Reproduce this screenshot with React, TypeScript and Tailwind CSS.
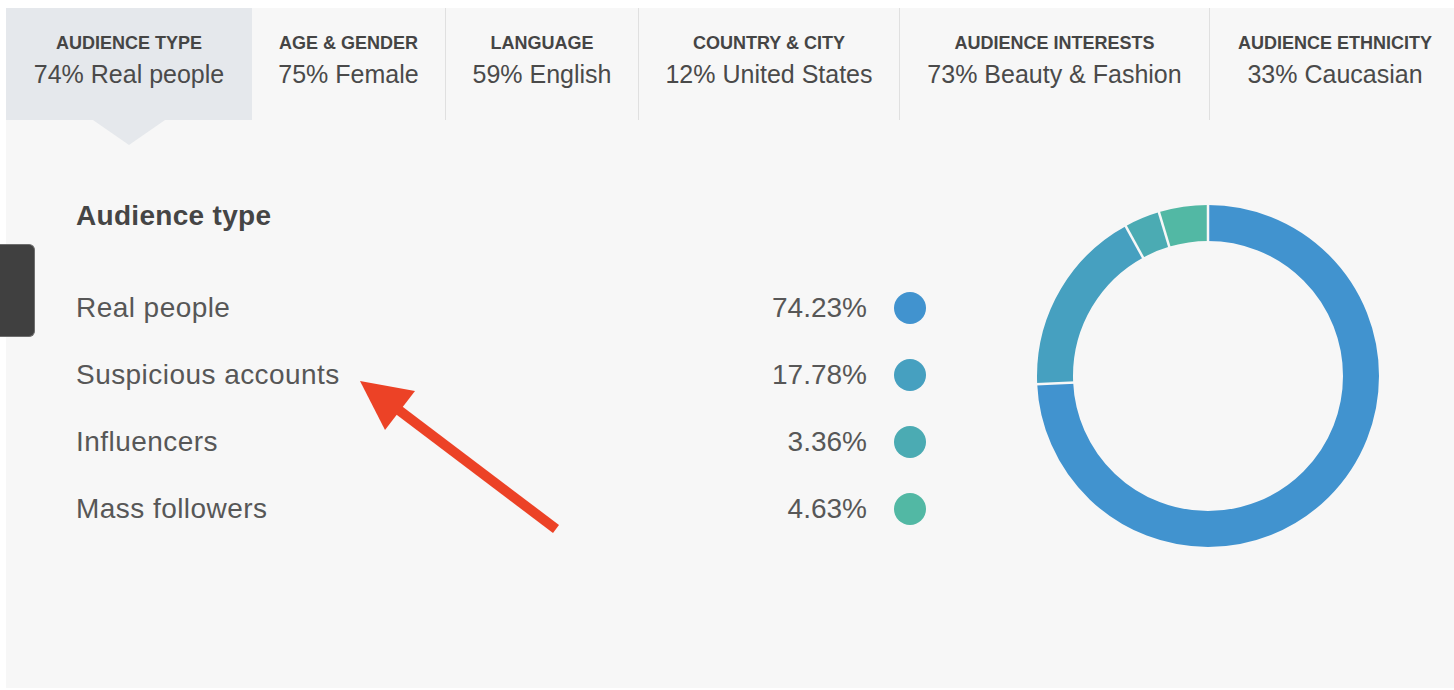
import React from "react";

type Tab = { label: string; value: string; width: string; active?: boolean };

const tabs: Tab[] = [
  { label: "AUDIENCE TYPE", value: "74% Real people", width: "w-[246px]", active: true },
  { label: "AGE & GENDER", value: "75% Female", width: "w-[194px]" },
  { label: "LANGUAGE", value: "59% English", width: "w-[193px]" },
  { label: "COUNTRY & CITY", value: "12% United States", width: "w-[261px]" },
  { label: "AUDIENCE INTERESTS", value: "73% Beauty & Fashion", width: "w-[310px]" },
  { label: "AUDIENCE ETHNICITY", value: "33% Caucasian", width: "w-[250px]" },
];

const rows = [
  { name: "Real people", pct: 74.23, color: "#4193cf", dot: "bg-[#4193cf]" },
  { name: "Suspicious accounts", pct: 17.78, color: "#46a0c0", dot: "bg-[#46a0c0]" },
  { name: "Influencers", pct: 3.36, color: "#4babb3", dot: "bg-[#4babb3]" },
  { name: "Mass followers", pct: 4.63, color: "#52b8a4", dot: "bg-[#52b8a4]" },
];

function Donut() {
  const size = 344;
  const c = size / 2;
  const r = 153;
  const circ = 2 * Math.PI * r;
  const total = rows.reduce((s, x) => s + x.pct, 0);
  let start = 0;
  const bounds: number[] = [];

  return (
    <svg width={size} height={size} viewBox={`0 0 ${size} ${size}`}>
      <g transform={`rotate(-90 ${c} ${c})`}>
        {rows.map((row) => {
          const len = (row.pct / total) * circ;
          const offset = -start;
          bounds.push(start / circ);
          start += len;
          return (
            <circle
              key={row.name}
              cx={c}
              cy={c}
              r={r}
              fill="none"
              stroke={row.color}
              strokeWidth={36}
              strokeDasharray={`${len} ${circ}`}
              strokeDashoffset={offset}
            />
          );
        })}
      </g>
      {bounds.map((b, i) => {
        const a = b * 2 * Math.PI;
        const x1 = c + 133 * Math.sin(a);
        const y1 = c - 133 * Math.cos(a);
        const x2 = c + 173 * Math.sin(a);
        const y2 = c - 173 * Math.cos(a);
        return <line key={i} x1={x1} y1={y1} x2={x2} y2={y2} stroke="#f7f7f7" strokeWidth={2.5} />;
      })}
    </svg>
  );
}

export default function App() {
  return (
    <div className="relative w-[1454px] h-[690px] bg-white overflow-hidden font-['Liberation_Sans',Arial,sans-serif]">
      <div className="relative ml-[6px] mt-[8px] h-[680px] bg-[#f7f7f7]">
        <div className="flex h-[112px]">
          {tabs.map((tab, i) => (
            <div
              key={tab.label}
              className={`relative shrink-0 ${tab.width} flex flex-col items-center pt-[25px] ${
                tab.active ? "bg-[#e5e8ec]" : ""
              } ${i > 0 && i < tabs.length - 1 ? "border-r border-[#e0e0e0]" : ""}`}
            >
              <div className="text-[18px] leading-[20px] font-bold text-[#454545] whitespace-nowrap">{tab.label}</div>
              <div className="mt-[7px] text-[25px] leading-[28px] text-[#4a4a4a] whitespace-nowrap">{tab.value}</div>
              {tab.active && (
                <div className="absolute left-1/2 -translate-x-1/2 top-full w-0 h-0 border-x-[36px] border-t-[25px] border-x-transparent border-t-[#e5e8ec]" />
              )}
            </div>
          ))}
        </div>

        <div className="flex pt-[80px] pl-[70px]">
          <div className="w-[850px] shrink-0">
            <h2 className="text-[28px] leading-[32px] font-bold tracking-[0.3px] text-[#454545]">Audience type</h2>
            <div className="mt-[42px]">
              {rows.map((row) => (
                <div key={row.name} className="h-[67px] flex items-center justify-between">
                  <span className="text-[28px] leading-[32px] tracking-[0.45px] text-[#575757]">{row.name}</span>
                  <div className="flex items-center">
                    <span className="text-[28px] leading-[32px] text-[#575757]">{row.pct.toFixed(2)}%</span>
                    <span className={`ml-[27px] w-[32px] h-[32px] rounded-full ${row.dot}`} />
                  </div>
                </div>
              ))}
            </div>
          </div>
          <div className="ml-[110px] mt-[4px] shrink-0">
            <Donut />
          </div>
        </div>

        <svg className="absolute left-[348px] top-[365px]" width="210" height="165" viewBox="354 373 210 165">
          <line x1="556" y1="529" x2="396" y2="408" stroke="#ec4226" strokeWidth="10" />
          <polygon points="360,381 415,391 385,430" fill="#ec4226" />
        </svg>
      </div>

      <div className="absolute left-0 top-[244px] w-[35px] h-[93px] bg-[#404040] border border-l-0 border-[#6e6e6e] rounded-r-[6px]" />
    </div>
  );
}
